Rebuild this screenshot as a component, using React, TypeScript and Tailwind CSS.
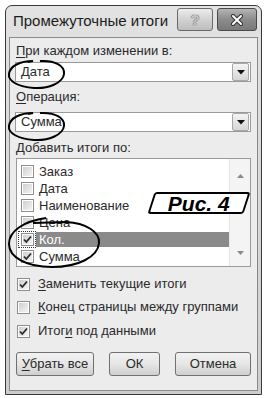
const items = [
  { label: 'Заказ', checked: false },
  { label: 'Дата', checked: false },
  { label: 'Наименование', checked: false },
  { label: 'Цена', checked: false },
  { label: 'Кол.', checked: true, selected: true },
  { label: 'Сумма', checked: true },
];

function CheckBox({ checked }: { checked: boolean }) {
  return (
    <div className="w-[13px] h-[13px] shrink-0 border border-[#8e8e8e] bg-white p-[1px]">
      <div className="relative w-full h-full bg-gradient-to-br from-[#cfcfcf] to-[#f4f4f4]">
        {checked && (
          <svg className="absolute -left-[1px] -top-[1px]" width="11" height="11" viewBox="0 0 11 11">
            <path d="M2 5.5 L4.3 8 L9 2.5" fill="none" stroke="#2a2a2a" strokeWidth="1.8" />
          </svg>
        )}
      </div>
    </div>
  );
}

function Combo({ value }: { value: string }) {
  return (
    <div className="flex items-center h-[20px] w-[236px] border border-[#9a9a9a] bg-white">
      <span className="flex-1 pl-[5px] text-[13px] leading-[14px] text-[#2a2a2a]">{value}</span>
      <div className="flex items-center justify-center w-[17px] h-[18px] mr-[1px] border border-[#a8a8a8] rounded-[2px] bg-gradient-to-b from-[#f4f4f4] to-[#d6d6d6]">
        <svg width="8" height="5" viewBox="0 0 8 5">
          <path d="M0 0 H8 L4 4.5 Z" fill="#111" />
        </svg>
      </div>
    </div>
  );
}

function Button({ children, w }: { children: React.ReactNode; w: string }) {
  return (
    <div className={`${w} h-[24px] flex items-center justify-center rounded-[3px] border border-[#707070] bg-gradient-to-b from-[#f2f2f2] via-[#e6e6e6] to-[#cfcfcf] text-[13px] text-[#2a2a2a]`}>
      {children}
    </div>
  );
}

export default function App() {
  return (
    <div className="relative w-[268px] h-[398px] bg-white overflow-hidden font-['Liberation_Sans',sans-serif]">
      {/* Window */}
      <div className="ml-[5px] mt-[5px] w-[257px] h-[390px] flex flex-col rounded-t-[7px] border border-[#3a3a3a] bg-gradient-to-b from-[#e2e2e2] to-[#cdcdcd] px-[3px] pb-[3px]">
        {/* Title bar */}
        <div className="h-[31px] flex items-start pt-[2px] pl-[4px] pr-[1px]">
          <span className="mt-[5px] flex-1 text-[15px] leading-[16px] text-[#1c1c1c]">Промежуточные итоги</span>
          <div className="flex gap-[4px]">
            <div className="w-[36px] h-[23px] flex items-center justify-center rounded-[3px] border border-[#6a6a6a] bg-gradient-to-b from-[#ececec] via-[#d2d2d2] to-[#bdbdbd]">
              <span className="text-[15px] font-bold leading-none text-[#c8c8c8] [text-shadow:0_0_1px_#555,0_0_1px_#555]">?</span>
            </div>
            <div className="w-[40px] h-[23px] flex items-center justify-center rounded-[3px] border border-[#4a4a4a] bg-gradient-to-b from-[#b4b4b4] via-[#8c8c8c] to-[#7a7a7a]">
              <svg width="14" height="12" viewBox="0 0 14 12">
                <path d="M3 2 L11 10 M11 2 L3 10" stroke="#333" strokeWidth="4" strokeLinecap="round" />
                <path d="M3 2 L11 10 M11 2 L3 10" stroke="#fff" strokeWidth="2" strokeLinecap="round" />
              </svg>
            </div>
          </div>
        </div>

        {/* Client area */}
        <div className="flex-1 flex flex-col border border-[#8a8a8a] bg-[#ececec] pl-[6px] text-[13px] leading-[14px] text-[#2a2a2a]">
          <div className="mt-[6px]">
            <u className="underline-offset-2">П</u>ри каждом изменении в:
          </div>
          <div className="mt-[4px] -ml-[1px]">
            <Combo value="Дата" />
          </div>
          <div className="mt-[8px]">
            <u className="underline-offset-2">О</u>перация:
          </div>
          <div className="mt-[8px] -ml-[1px]">
            <Combo value="Сумма" />
          </div>
          <div className="mt-[9px]">
            <u className="underline-offset-2">Д</u>обавить итоги по:
          </div>

          {/* List */}
          <div className="mt-[3px] flex w-[235px] h-[109px] border border-[#9a9a9a] bg-white overflow-hidden">
            <div className="flex-1 flex flex-col pt-[4px]">
              {items.map((it) => (
                <div key={it.label} className="flex items-center h-[17px] shrink-0">
                  <div className={`ml-[1px] w-[18px] h-[17px] flex items-center justify-center ${it.selected ? 'border border-dotted border-[#333]' : ''}`}>
                    <CheckBox checked={it.checked} />
                  </div>
                  <span className={`flex-1 h-[15px] flex items-center pl-[3px] ${it.selected ? 'bg-[#8a8a8a] text-white' : ''}`}>
                    {it.label}
                  </span>
                </div>
              ))}
            </div>
            <div className="w-[21px] flex flex-col items-center bg-[#f4f4f4] border-l border-[#e6e6e6]">
              <svg className="mt-[15px]" width="7" height="4" viewBox="0 0 7 4">
                <path d="M0 4 L3.5 0 L7 4 Z" fill="#8a8a8a" />
              </svg>
              <svg className="mt-auto mb-[11px]" width="7" height="4" viewBox="0 0 7 4">
                <path d="M0 0 H7 L3.5 4 Z" fill="#8a8a8a" />
              </svg>
            </div>
          </div>

          {/* Options */}
          <div className="mt-[9px] flex items-center gap-[8px] h-[16px] pl-[1px]">
            <CheckBox checked />
            <span>
              <u className="underline-offset-2">З</u>аменить текущие итоги
            </span>
          </div>
          <div className="mt-[7px] flex items-center gap-[8px] h-[16px] pl-[1px]">
            <CheckBox checked={false} />
            <span>
              <u className="underline-offset-2">К</u>онец страницы между группами
            </span>
          </div>
          <div className="mt-[8px] flex items-center gap-[8px] h-[16px] pl-[1px]">
            <CheckBox checked />
            <span>
              Итог<u className="underline-offset-2">и</u> под данными
            </span>
          </div>

          {/* Buttons */}
          <div className="mt-[13px] flex gap-[15px]">
            <Button w="w-[78px]">
              <span>
                <u className="underline-offset-2">У</u>брать все
              </span>
            </Button>
            <Button w="w-[51px]">ОК</Button>
            <Button w="w-[76px]">Отмена</Button>
          </div>
        </div>
      </div>

      {/* Annotations */}
      <svg className="absolute left-0 top-0 pointer-events-none" width="268" height="398" viewBox="0 0 268 398">
        <g fill="none" stroke="#000" strokeWidth="2">
          <path d="M40 61 C 55 60, 65 66, 64 74 C 63 83, 48 89, 34 88 C 18 87, 8 81, 9 74 C 10 66, 20 61, 33 61 L 28 62" />
          <path d="M40 113 C 55 112, 65 118, 64 126 C 63 135, 48 141, 34 140 C 18 139, 8 133, 9 126 C 10 118, 20 113, 33 113 L 28 114" />
          <path d="M33 223 L 66 222 C 86 223, 100 232, 99 243 C 98 257, 78 267, 52 267 C 26 267, 9 257, 9 244 C 9 231, 24 221, 46 218" />
        </g>
      </svg>

      {/* Figure label */}
      <div className="absolute left-[151px] top-[192px] w-[96px] h-[22px] -skew-x-[18deg] rounded-[3px] border-2 border-black bg-white flex items-center justify-center">
        <span className="skew-x-[18deg] italic font-bold text-[21px] leading-none text-black">Рис. 4</span>
      </div>
    </div>
  );
}
